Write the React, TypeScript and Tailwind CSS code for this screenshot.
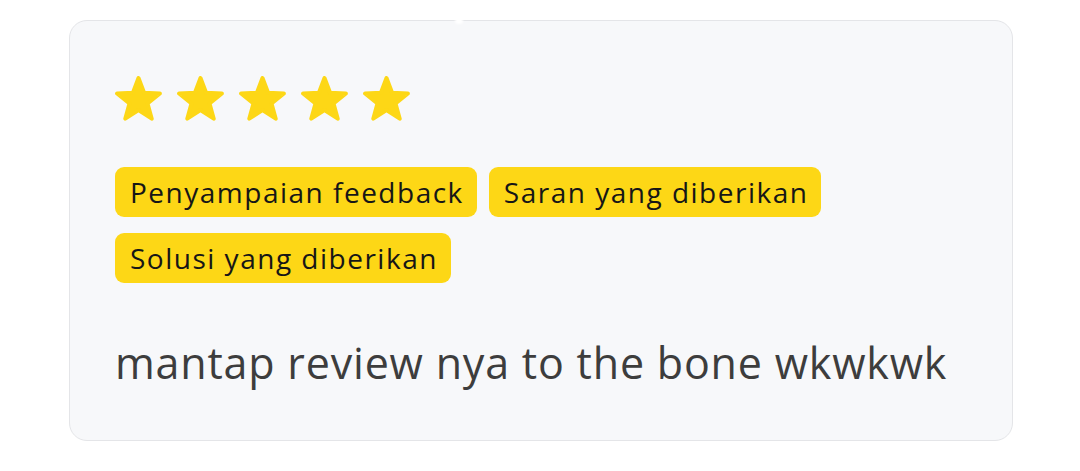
import React from "react";

function Star() {
  return (
    <svg width="47" height="45" viewBox="0 0 47 45" className="shrink-0">
      <polygon
        points="23.5,2 29.08,16.81 44.9,17.55 32.54,27.44 36.73,42.7 23.5,34 10.27,42.7 14.46,27.44 2.1,17.55 17.92,16.81"
        fill="#fdd716"
        stroke="#fdd716"
        strokeWidth="4"
        strokeLinejoin="round"
      />
    </svg>
  );
}

const tags = ["Penyampaian feedback", "Saran yang diberikan", "Solusi yang diberikan"];

export default function App() {
  return (
    <div className="w-[1080px] h-[471px] bg-white pt-[20px] pl-[69px] font-['Open_Sans',sans-serif]">
      <div className="relative w-[944px] h-[421px] rounded-[18px] border border-[#e4e5e8] bg-[#f7f8fa] pl-[45px] pt-[55px]">
        <div className="absolute -top-[3px] left-[385px] w-[8px] h-[6px] rounded-full bg-white blur-[1px]" />
        <div className="flex gap-[15px]">
          {Array.from({ length: 5 }).map((_, i) => (
            <Star key={i} />
          ))}
        </div>
        <div className="mt-[46px] flex flex-wrap gap-x-[12px] gap-y-[16px] w-[860px]">
          {tags.map((t) => (
            <div
              key={t}
              className="h-[50px] flex items-center pl-[15px] pr-[13px] rounded-[9px] bg-[#fdd716] text-[#161616] text-[28px] font-medium leading-none tracking-[1.5px]"
            >
              {t}
            </div>
          ))}
        </div>
        <div className="mt-[56px] text-[43px] leading-[48px] text-[#3d3d3d] tracking-[0.8px]">
          mantap review nya to the bone wkwkwk
        </div>
      </div>
    </div>
  );
}
